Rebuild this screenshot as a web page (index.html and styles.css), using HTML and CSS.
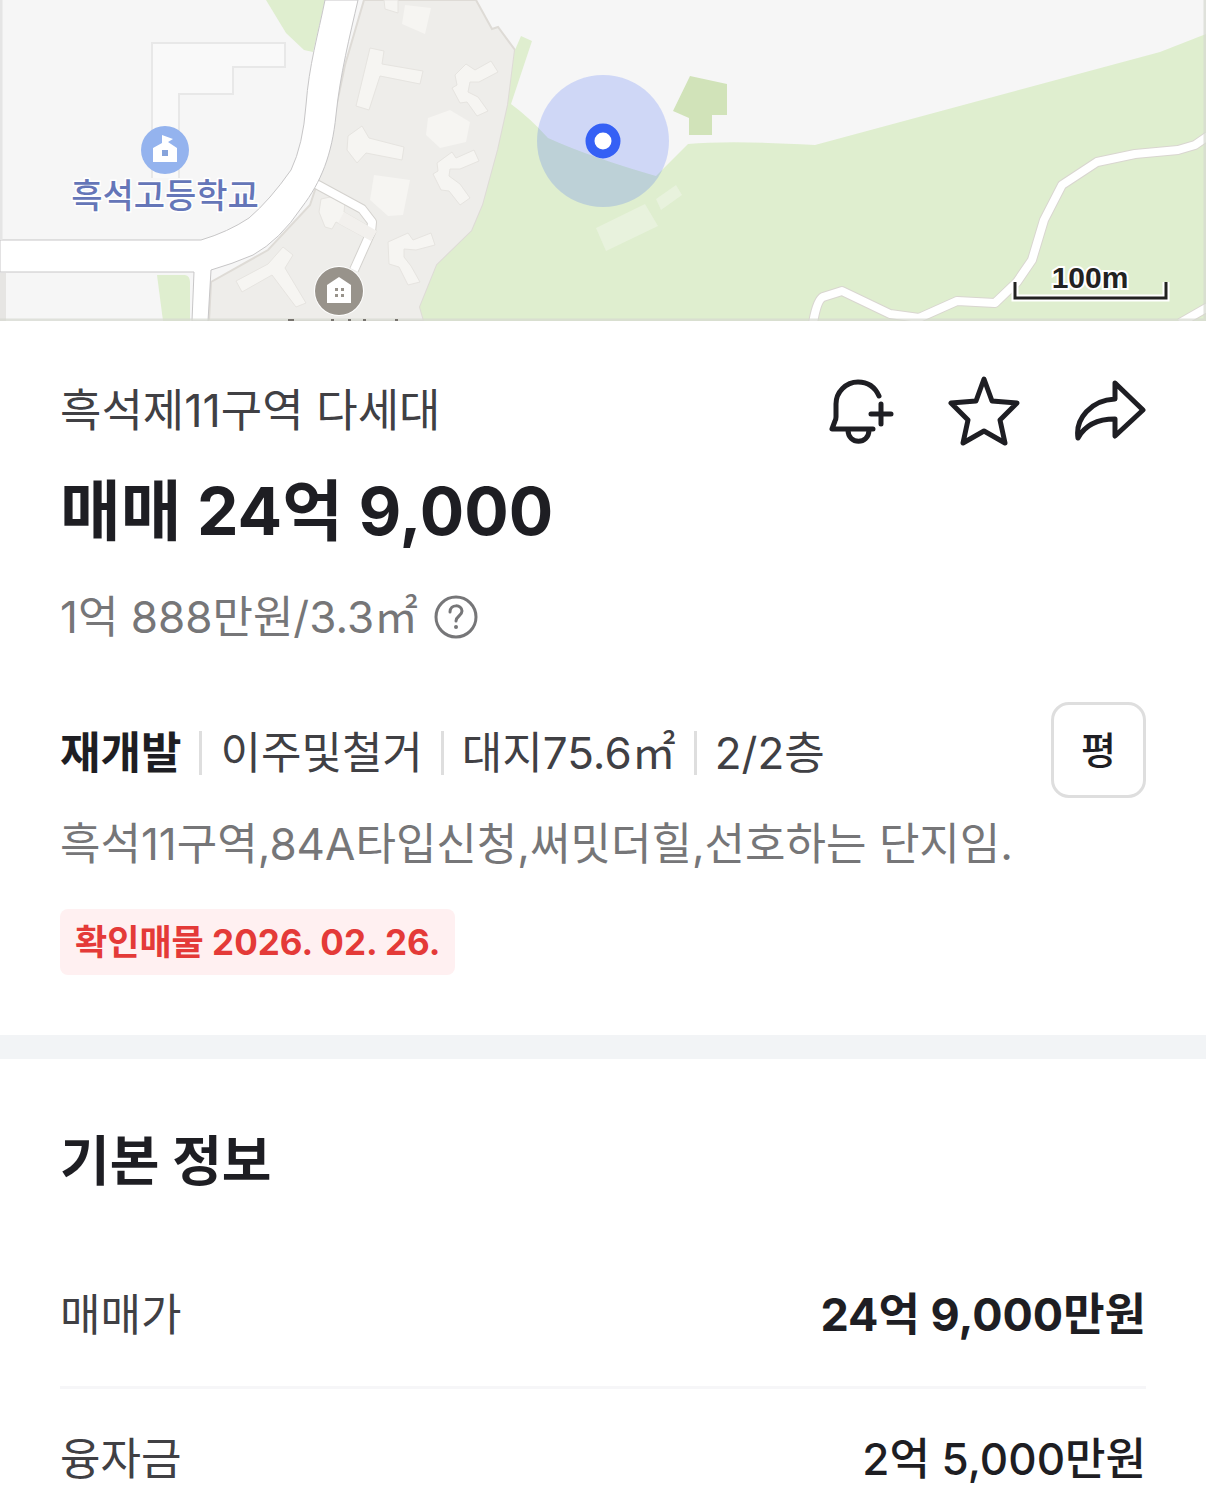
FILE: index.html
```html
<!DOCTYPE html>
<html lang="ko">
<head>
    <meta charset="UTF-8">
    <meta name="viewport" content="width=device-width, initial-scale=1.0">
    <title>흑석제11구역 다세대</title>
    <link rel="stylesheet" href="styles.css">
</head>
<body>
    <div class="map">
        <svg class="map-canvas" viewBox="0 0 1206 321" preserveAspectRatio="xMidYMid slice" role="img" aria-label="매물 위치 지도">
            <rect width="1206" height="321" fill="#f6f6f6"/>
            <!-- apartment blocks -->
            <path d="M364 0H476L492 29L498 27L515 50L508 105L498 150L483 205L472 231L437 265L420 307L424 321H209L211 282L268 250L310 205L325 160L345 65Z" fill="#eeedea" stroke="#dedbd6" stroke-width="2"/>
            <g fill="#f6f5f2" stroke="#e6e4e0" stroke-width="1">
                <path d="M370 48L384 51L382 64L423 71L420 84L380 76L369 110L356 106Z"/>
                <path d="M362 126L369 138L404 147L402 160L366 153L357 163L347 150L348 136Z"/>
                <path d="M455 75L466 64L475 70L491 61L498 72L479 82L470 82L468 92L478 97L488 111L477 116L467 102L460 103L452 88L457 85Z"/>
                <path d="M437 163L452 152L456 158L474 150L479 161L460 169L450 169L449 176L460 184L470 198L460 205L449 191L441 190L433 174L438 171Z"/>
                <path d="M388 242L408 233L413 240L431 233L435 245L416 250L404 249L404 257L411 266L420 282L408 285L399 267L389 264Z"/>
                <path d="M321 199L335 196L345 202L344 212L377 231L371 241L336 222L332 229L325 227L319 212Z"/>
                <path d="M236 281L268 264L283 247L293 255L285 268L306 303L296 307L272 275L242 292Z"/>
                <path d="M405 5L431 8L425 34L402 24Z" stroke="none"/>
                <path d="M384 0H398V13L385 9Z"/>
                <path d="M428 118L450 110L470 122L466 142L440 148L426 135Z" stroke="none"/>
                <path d="M374 175L410 180L403 215L388 216L370 200Z" stroke="none"/>
            </g>
            <!-- parks -->
            <g fill="#dfeecf">
                <path d="M266 0H325L313 52L304 50L286 33Z"/>
                <path d="M157 275H185Q190 276 190 282V321H163Z"/>
                <path d="M515 50L521 36L532 41L511 104Q530 118 548 138Q590 157 656 176L688 144Q730 140 815 145L1160 52L1206 34V321H424L420 307L437 265L472 231L483 205L498 150L508 105Z"/>
            </g>
            <path d="M690 76L727 84V115H712V135H689V118L673 111Z" fill="#d1e3b9"/>
            <path d="M596 228L645 204L658 226L606 251ZM656 199L676 185L682 195L661 210Z" fill="#e8f2dd"/>
            <!-- school building -->
            <path d="M152 178V43H285V67H233V94H179V178" fill="#f9f9f9" stroke="#e8e8e8" stroke-width="2"/>
            <!-- footpaths -->
            <g fill="none" stroke-linejoin="round">
                <path d="M813 323Q817 300 823 297L842 291L890 314L919 318L957 301L995 303L1017 282L1032 260L1044 220L1062 185L1097 162L1135 154L1178 150L1195 145L1208 136M1180 323L1208 307" stroke="#d9d6d0" stroke-width="10"/>
                <path d="M813 323Q817 300 823 297L842 291L890 314L919 318L957 301L995 303L1017 282L1032 260L1044 220L1062 185L1097 162L1135 154L1178 150L1195 145L1208 136M1180 323L1208 307" stroke="#fff" stroke-width="8"/>
                <path d="M316 184L362 209L372 222L371 232L354 270" stroke="#d4d2ce" stroke-width="10"/>
                <path d="M316 184L362 209L372 222L371 232L354 270" stroke="#fff" stroke-width="8"/>
            </g>
            <path d="M344 212L377 231L371 241L338 223Z" fill="#f2f0ed"/>
            <!-- roads -->
            <path d="M0 240H201Q228 232 249 218Q270 200 291 170Q303 145 306 105C309 65 318 35 325 0H358C350 35 340 75 336 115C332 155 321 182 302 207Q280 240 253 255Q232 264 211 270L208 321H192L194 272H0Z" fill="#fff" stroke="#c7c6c7" stroke-width="1"/>
            <path d="M0 273H6V321H0Z" fill="#e6e5e3"/>
            <path d="M1 0V240" stroke="#e5e5e5" stroke-width="3"/>
            <path d="M1205 0V321M0 320H1206" stroke="#d5d9d0" stroke-opacity="0.7" stroke-width="3"/>
            <!-- place markers -->
            <circle cx="165" cy="150" r="24" fill="#94b3ee"/>
            <path d="M153 148L162 143V135L173 139L168 142L177 148V162H153Z" fill="#fff"/>
            <rect x="162" y="150" width="6" height="6" fill="#86a3db"/>
            <text class="map-label" x="165" y="208">흑석고등학교</text>
            <circle cx="339" cy="291" r="25" fill="#fff"/>
            <circle cx="339" cy="291" r="24" fill="#98938b"/>
            <path d="M327 285L339 277L351 285V303H327Z" fill="#fff"/>
            <path d="M335 288h3v3h-3zM341 288h3v3h-3zM335 294h3v3h-3zM341 294h3v3h-3z" fill="#98938b"/>
            <path d="M288 320h6M331 320h3M348 320h3M363 320h3M395 320h3" stroke="#77736e" stroke-width="2"/>
            <!-- listing position -->
            <circle cx="603" cy="141" r="66" fill="#365efa" fill-opacity="0.2"/>
            <circle cx="603" cy="141" r="13" fill="#fff" stroke="#3560f5" stroke-width="9"/>
            <text class="map-scale" x="1090" y="288">100m</text>
            <path d="M1015 282V298H1166V282" fill="none" stroke="#fff" stroke-width="7"/>
            <path d="M1015 282V298H1166V282" fill="none" stroke="#222" stroke-width="3"/>
        </svg>
    </div>

    <main>
        <section class="summary">
            <div class="summary-head">
                <p class="complex-name">흑석제11구역 다세대</p>
                <div class="actions">
                    <button class="icon-btn" type="button" aria-label="알림 추가">
                        <svg viewBox="0 0 72 72">
                            <path d="M57 21C53 12 46 7 36 7C24 7 14 17 14 29V42Q14 44 13 46L10 54H51M59 29V49M49 39H69"/>
                            <path d="M26 55C26 70 47 70 47 55"/>
                        </svg>
                    </button>
                    <button class="icon-btn" type="button" aria-label="관심 매물">
                        <svg viewBox="0 0 72 72">
                            <path d="M36 4L44 26L69 28L52 45L57 68L36 56L15 68L20 45L3 28L28 26Z"/>
                        </svg>
                    </button>
                    <button class="icon-btn" type="button" aria-label="공유">
                        <svg viewBox="0 0 72 72">
                            <path d="M41 8L69 35L41 61V44C24 44 11 50 4 63C1 44 17 25 41 24Z"/>
                        </svg>
                    </button>
                </div>
            </div>
            <h1 class="price">매매 24억 9,000</h1>
            <div class="unit-price">
                <span>1억 888만원/3.3㎡</span>
                <button class="help-btn" type="button" aria-label="단위 가격 안내">
                    <svg viewBox="0 0 44 44">
                        <circle cx="22" cy="22" r="20"/>
                        <path d="M16 17C16 9 28 9 28 16C28 21 22 21 22 26"/>
                        <circle class="dot" cx="22" cy="32" r="2"/>
                    </svg>
                </button>
            </div>
            <div class="spec-row">
                <ul class="specs">
                    <li class="spec-type">재개발</li>
                    <li>이주및철거</li>
                    <li>대지75.6㎡</li>
                    <li>2/2층</li>
                </ul>
                <button class="area-btn" type="button">평</button>
            </div>
            <p class="description">흑석11구역,84A타입신청,써밋더힐,선호하는 단지임.</p>
            <span class="verified">확인매물 2026. 02. 26.</span>
        </section>

        <section class="info">
            <h2>기본 정보</h2>
            <dl class="info-list">
                <div class="info-item">
                    <dt>매매가</dt>
                    <dd class="strong">24억 9,000만원</dd>
                </div>
                <div class="info-item">
                    <dt>융자금</dt>
                    <dd>2억 5,000만원</dd>
                </div>
            </dl>
        </section>
    </main>
</body>
</html>
```
FILE: styles.css
```css
* {
    box-sizing: border-box;
}
body {
    margin: 0;
    font-family: Inter, "Noto Sans CJK KR", sans-serif;
    font-size: 44px;
    line-height: 60px;
    color: #1e1e23;
    background: #fff;
}
h1, h2, p, ul, dl, dd {
    margin: 0;
    padding: 0;
}
button {
    padding: 0;
    border: none;
    background: none;
    font-family: inherit;
    color: inherit;
    cursor: pointer;
}
svg {
    display: block;
    width: 100%;
    height: 100%;
}
.map {
    height: 321px;
    overflow: hidden;
}
.map-label {
    font-size: 34px;
    font-weight: 500;
    text-anchor: middle;
    fill: #6576b8;
    stroke: #fff;
    stroke-width: 3px;
    paint-order: stroke;
}
.map-scale {
    font-family: "Liberation Sans", sans-serif;
    font-size: 30px;
    font-weight: bold;
    text-anchor: middle;
    fill: #222;
    stroke: #fff;
    stroke-width: 4px;
    paint-order: stroke;
}
.summary {
    padding: 60px;
    border-bottom: 24px solid #f2f4f6;
}
.summary-head {
    display: flex;
    justify-content: space-between;
    align-items: center;
    height: 60px;
}
.complex-name {
    font-size: 45px;
    color: #404044;
}
.actions {
    display: flex;
    gap: 54px;
}
.icon-btn {
    width: 72px;
    height: 72px;
}
.icon-btn path {
    fill: none;
    stroke: #1e1e23;
    stroke-width: 5;
    stroke-linecap: round;
    stroke-linejoin: round;
}
.price {
    margin-top: 28px;
    font-size: 66px;
    line-height: 84px;
}
.unit-price {
    display: flex;
    align-items: center;
    gap: 16px;
    margin-top: 34px;
    color: #767678;
}
.help-btn {
    width: 44px;
    height: 44px;
}
.help-btn svg {
    fill: none;
    stroke: #767678;
    stroke-width: 3;
    stroke-linecap: round;
}
.help-btn .dot {
    fill: #767678;
    stroke: none;
}
.spec-row {
    display: flex;
    justify-content: space-between;
    align-items: center;
    margin-top: 55px;
}
.specs {
    display: flex;
    align-items: center;
    padding-top: 6px;
    list-style: none;
    color: #404044;
}
.specs li {
    display: flex;
    align-items: center;
}
.specs li + li::before {
    content: "";
    width: 3px;
    height: 44px;
    margin: 0 18px;
    background: #dedede;
}
.specs .spec-type {
    font-weight: bold;
    color: #1e1e23;
}
.area-btn {
    width: 95px;
    height: 96px;
    padding-bottom: 6px;
    border: 3px solid #dedede;
    border-radius: 18px;
    font-size: 38px;
    font-weight: 500;
}
.description {
    margin-top: 16px;
    color: #767678;
}
.verified {
    display: block;
    width: fit-content;
    margin-top: 35px;
    padding: 0 15px;
    border-radius: 8px;
    font-size: 35px;
    font-weight: bold;
    line-height: 66px;
    color: #e43a38;
    background: #fff0f1;
}
.info {
    padding: 62px 60px 0;
}
.info h2 {
    font-size: 54px;
    line-height: 82px;
}
.info-list {
    margin-top: 42px;
}
.info-item {
    display: flex;
    justify-content: space-between;
    padding: 40px 0 41px;
}
.info-item + .info-item {
    border-top: 3px solid #f6f6f8;
}
.info-item:last-child {
    padding-bottom: 18px;
}
.info-item dt {
    color: #404044;
}
.info-item dd {
    font-weight: 500;
}
.info-item .strong {
    font-size: 45px;
    font-weight: bold;
}
```
